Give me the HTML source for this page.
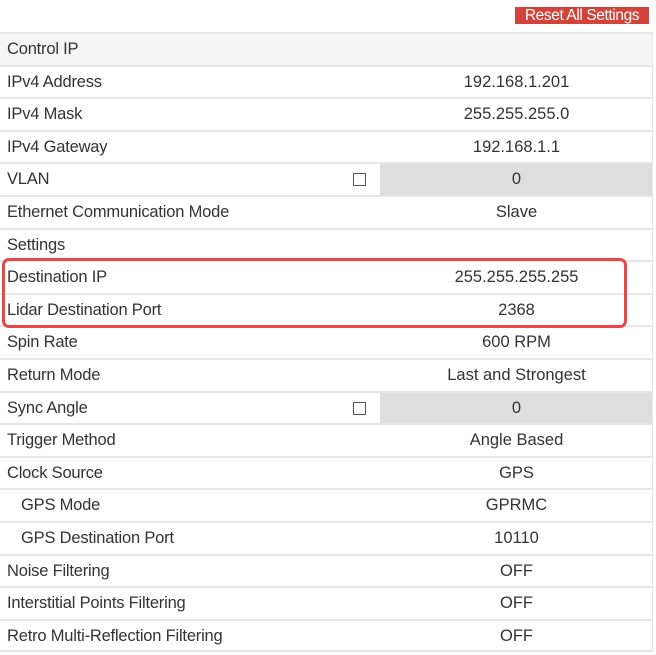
<!DOCTYPE html>
<html><head><meta charset="utf-8"><style>
body{margin:0;width:656px;height:655px;background:#fff;font-family:"Liberation Sans",sans-serif;font-size:16.5px;color:#333;position:relative;overflow:hidden}
.btn{position:absolute;left:515px;top:7px;width:134px;height:17px;background:#d2443b;color:#fff;font-size:15.5px;line-height:17px;text-align:center;letter-spacing:-0.4px}
.row{position:absolute;left:0;width:653px;height:31px;border-top:2px solid #e6e6e6;line-height:31px}
.row.h{background:#f5f5f5}
.l{position:absolute;left:7px;top:0;letter-spacing:-0.2px}
.l.i{left:21px}
.v{position:absolute;left:380px;width:273px;top:0;height:31px;text-align:center}
.v.g{background:#dedede}
.cb{position:absolute;left:353px;top:9px;width:11px;height:11px;border:1px solid #555;background:#fff}
.red{position:absolute;left:2px;top:258px;width:619px;height:64px;border:3px solid #ea4848;border-radius:7px}
.end{position:absolute;left:0;top:650px;width:653px;border-top:2px solid #e6e6e6}
.rb{position:absolute;left:652px;top:32px;height:620px;border-left:1px solid #e6e6e6}
</style></head><body>
<div class="btn">Reset All Settings</div>
<div class="row h" style="top:32px"><span class="l">Control IP</span></div>
<div class="row" style="top:64.6px"><span class="l">IPv4 Address</span><span class="v">192.168.1.201</span></div>
<div class="row" style="top:97.2px"><span class="l">IPv4 Mask</span><span class="v">255.255.255.0</span></div>
<div class="row" style="top:129.8px"><span class="l">IPv4 Gateway</span><span class="v">192.168.1.1</span></div>
<div class="row" style="top:162.4px"><span class="l">VLAN</span><span class="cb"></span><span class="v g">0</span></div>
<div class="row" style="top:195px"><span class="l">Ethernet Communication Mode</span><span class="v">Slave</span></div>
<div class="row" style="top:227.6px"><span class="l">Settings</span></div>
<div class="row" style="top:260.2px"><span class="l">Destination IP</span><span class="v">255.255.255.255</span></div>
<div class="row" style="top:292.8px"><span class="l">Lidar Destination Port</span><span class="v">2368</span></div>
<div class="row" style="top:325.4px"><span class="l">Spin Rate</span><span class="v">600 RPM</span></div>
<div class="row" style="top:358px"><span class="l">Return Mode</span><span class="v">Last and Strongest</span></div>
<div class="row" style="top:390.6px"><span class="l">Sync Angle</span><span class="cb"></span><span class="v g">0</span></div>
<div class="row" style="top:423.2px"><span class="l">Trigger Method</span><span class="v">Angle Based</span></div>
<div class="row" style="top:455.8px"><span class="l">Clock Source</span><span class="v">GPS</span></div>
<div class="row" style="top:488.4px"><span class="l i">GPS Mode</span><span class="v">GPRMC</span></div>
<div class="row" style="top:521px"><span class="l i">GPS Destination Port</span><span class="v">10110</span></div>
<div class="row" style="top:553.6px"><span class="l">Noise Filtering</span><span class="v">OFF</span></div>
<div class="row" style="top:586.2px"><span class="l">Interstitial Points Filtering</span><span class="v">OFF</span></div>
<div class="row" style="top:618.8px"><span class="l">Retro Multi-Reflection Filtering</span><span class="v">OFF</span></div>
<div class="end"></div>
<div class="rb"></div>
<div class="red"></div>
</body></html>
